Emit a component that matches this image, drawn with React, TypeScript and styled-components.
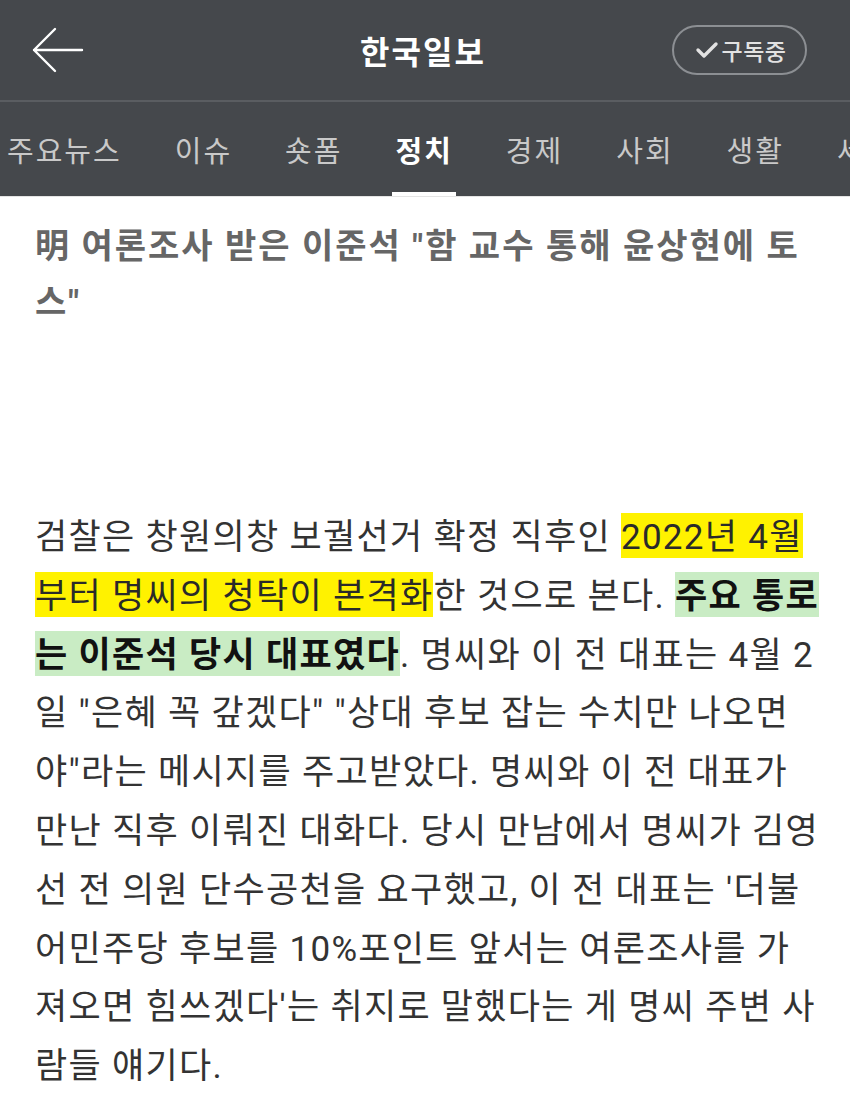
import React from "react";
import styled, { createGlobalStyle } from "styled-components";

const Global = createGlobalStyle`
  html, body { margin: 0; padding: 0; background: #ffffff; }
  body { font-family: Roboto, "Noto Sans CJK KR", sans-serif; -webkit-font-smoothing: antialiased; }
`;

const Page = styled.div`
  width: 850px;
  min-height: 1116px;
  background: #ffffff;
  overflow: hidden;
`;

const TopBar = styled.header`
  height: 102px;
  background: #45484c;
  display: grid;
  grid-template-columns: 1fr auto 1fr;
  align-items: center;
  padding: 0 43px 0 31px;
  box-sizing: border-box;
  border-bottom: 2px solid #5a5d61;
`;

const BackButton = styled.button`
  justify-self: start;
  background: none;
  border: 0;
  padding: 0;
  width: 54px;
  height: 46px;
  display: flex;
  align-items: center;
  cursor: pointer;
`;

const Brand = styled.h1`
  margin: 0 0 0 8px;
  color: #ffffff;
  font-size: 32px;
  font-weight: 700;
  letter-spacing: 2px;
`;

const SubscribeButton = styled.button`
  justify-self: end;
  height: 50px;
  width: 135px;
  box-sizing: border-box;
  border: 2px solid #8c8f93;
  border-radius: 25px;
  background: transparent;
  color: #e2e2e2;
  font-family: Roboto, "Noto Sans CJK KR", sans-serif;
  font-size: 23px;
  font-weight: 500;
  letter-spacing: 0.5px;
  display: flex;
  align-items: center;
  justify-content: center;
  gap: 3px;
  padding: 0 0 0 2px;
`;

const Tabs = styled.nav`
  height: 94px;
  background: #45484c;
  display: flex;
  align-items: stretch;
  gap: 47px;
  padding-left: 4px;
  white-space: nowrap;
  overflow: hidden;
  border-bottom: 1px solid #e4e4e4;
`;

const Tab = styled.div<{ $active?: boolean }>`
  display: flex;
  align-items: center;
  padding: 4px 3px 0 3px;
  font-size: 29px;
  letter-spacing: 2px;
  font-weight: ${(p) => (p.$active ? 700 : 400)};
  color: ${(p) => (p.$active ? "#ffffff" : "#c9c9c9")};
  border-bottom: 4px solid ${(p) => (p.$active ? "#ffffff" : "transparent")};
  box-sizing: border-box;
  flex-shrink: 0;
`;

const Article = styled.main`
  padding: 21px 35px 0 35px;
`;

const Headline = styled.h2`
  margin: 0;
  font-size: 34px;
  line-height: 56px;
  font-weight: 700;
  color: #666666;
  letter-spacing: 2px;
`;

const Body = styled.p`
  margin: 179px 0 0 0;
  font-size: 35px;
  line-height: 58.8px;
  color: #333333;
  white-space: nowrap;
  letter-spacing: 1.3px;
`;

const Marker = styled.span<{ $tone: "yellow" | "green" }>`
  background: ${(p) => (p.$tone === "yellow" ? "#fff200" : "#c9ecc4")};
  color: ${(p) => (p.$tone === "yellow" ? "#2a2a2a" : "#111111")};
  font-weight: ${(p) => (p.$tone === "green" ? 700 : 400)};
  padding: 4px 0 0 0;
`;

const tabs = ["주요뉴스", "이슈", "숏폼", "정치", "경제", "사회", "생활", "세계"];

export default function App() {
  return (
    <Page>
      <Global />
      <TopBar>
        <BackButton aria-label="뒤로">
          <svg width="54" height="46" viewBox="0 0 54 46" fill="none">
            <path
              d="M51 23 H3 M24 2 L3 23 L24 44"
              stroke="#ffffff"
              strokeWidth="2.4"
              strokeLinecap="round"
              strokeLinejoin="round"
            />
          </svg>
        </BackButton>
        <Brand>한국일보</Brand>
        <SubscribeButton>
          <svg width="24" height="18" viewBox="0 0 24 18" fill="none">
            <path
              d="M3 9 L9 15 L21 3"
              stroke="#e2e2e2"
              strokeWidth="3.4"
              strokeLinecap="round"
              strokeLinejoin="round"
            />
          </svg>
          구독중
        </SubscribeButton>
      </TopBar>
      <Tabs>
        {tabs.map((t) => (
          <Tab key={t} $active={t === "정치"}>
            {t}
          </Tab>
        ))}
      </Tabs>
      <Article>
        <Headline>
          明 여론조사 받은 이준석 "함 교수 통해 윤상현에 토
          <br />
          스"
        </Headline>
        <Body>
          검찰은 창원의창 보궐선거 확정 직후인 <Marker $tone="yellow">2022년 4월</Marker>
          <br />
          <Marker $tone="yellow">부터 명씨의 청탁이 본격화</Marker>한 것으로 본다.{" "}
          <Marker $tone="green">주요 통로</Marker>
          <br />
          <Marker $tone="green">는 이준석 당시 대표였다</Marker>. 명씨와 이 전 대표는 4월 2
          <br />
          일 "은혜 꼭 갚겠다" "상대 후보 잡는 수치만 나오면
          <br />
          야"라는 메시지를 주고받았다. 명씨와 이 전 대표가
          <br />
          만난 직후 이뤄진 대화다. 당시 만남에서 명씨가 김영
          <br />
          선 전 의원 단수공천을 요구했고, 이 전 대표는 '더불
          <br />
          어민주당 후보를 10%포인트 앞서는 여론조사를 가
          <br />
          져오면 힘쓰겠다'는 취지로 말했다는 게 명씨 주변 사
          <br />
          람들 얘기다.
        </Body>
      </Article>
    </Page>
  );
}
